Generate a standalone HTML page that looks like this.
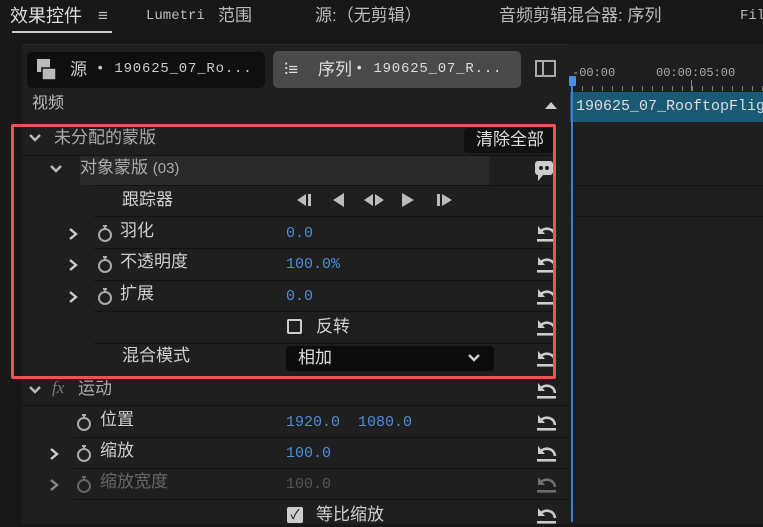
<!DOCTYPE html>
<html><head><meta charset="utf-8"><style>
*{margin:0;padding:0;box-sizing:border-box}
body{width:763px;height:522px;background:#181818;overflow:hidden;position:relative;font-family:"Liberation Sans","Noto Sans CJK SC",sans-serif;color:#c8c8c8}
.a{position:absolute;white-space:nowrap}
.t{font-size:17px;color:#cfcfcf;line-height:24px}
.m{font-family:"Liberation Mono","Noto Sans CJK SC",monospace}
.b{color:#4a8fd8;font-size:15px;line-height:20px}
.sep{position:absolute;height:1px;background:#121212}
.rs{position:absolute;left:534px;width:24px;height:22px}
.ch{position:absolute;width:12px;height:14px}
.sw{position:absolute;width:16px;height:20px}
</style></head><body>
<svg width="0" height="0" style="position:absolute"><defs>
<symbol id="r" viewBox="0 0 24 22"><path d="M4 4 L4 12 L11 12 Z" fill="#ccc"/><path d="M7 9 C11 5 20 6 21 14" stroke="#ccc" stroke-width="2.6" fill="none"/><rect x="3" y="17" width="19" height="2.6" fill="#ccc"/></symbol>
<symbol id="cr" viewBox="0 0 12 14"><path d="M3 2 L9 7 L3 12" stroke="#ccc" stroke-width="2.4" fill="none"/></symbol>
<symbol id="cd" viewBox="0 0 14 12"><path d="M2 3 L7 8 L12 3" stroke="#bbb" stroke-width="2.4" fill="none"/></symbol>
<symbol id="s" viewBox="0 0 16 20"><circle cx="8" cy="12" r="6" stroke="#aaa" stroke-width="2" fill="none"/><path d="M6 3 L10 3 M8 3 L8 6" stroke="#aaa" stroke-width="2"/></symbol>
</defs></svg>
<!-- top tabs -->
<div class="a t" style="left:10px;top:4px;font-size:18px;color:#ddd">效果控件</div>
<div class="a" style="left:12px;top:31px;width:100px;height:2px;background:#ccc"></div>
<div class="a" style="left:98px;top:6px;font-size:17px;color:#bbb">≡</div>
<div class="a m" style="left:146px;top:8px;font-size:14px;color:#bbb">Lumetri</div>
<div class="a t" style="left:218px;top:4px;color:#bbb">范围</div>
<div class="a t" style="left:315px;top:4px;color:#bbb">源:（无剪辑）</div>
<div class="a t" style="left:499px;top:4px;color:#bbb">音频剪辑混合器: 序列</div>
<div class="a m" style="left:740px;top:8px;font-size:14px;color:#bbb">Fil</div>
<!-- left panel -->
<div class="a" style="left:22px;top:44px;width:548px;height:480px;background:#1f1f1f;border-top:1px solid #2a2a2a"></div>
<div class="a" style="left:27px;top:52px;width:238px;height:36px;background:#0f0f0f;border-radius:5px"></div>
<svg class="a" style="left:36px;top:58px" width="22" height="24"><rect x="1" y="1" width="13" height="13" fill="#bbb"/><rect x="6" y="10" width="14" height="12" fill="#bbb" stroke="#0f0f0f" stroke-width="1.5"/></svg>
<div class="a t" style="left:70px;top:58px;color:#ccc">源</div>
<div class="a m" style="left:96px;top:61px;font-size:14px;color:#ccc;letter-spacing:0.8px">• 190625_07_Ro...</div>
<div class="a" style="left:273px;top:51px;width:248px;height:37px;background:#4a4a4a;border-radius:5px"></div>
<div class="a t" style="left:284px;top:58px;color:#ddd">⫶≡</div>
<div class="a t" style="left:318px;top:58px;color:#ddd">序列</div>
<div class="a m" style="left:355px;top:61px;font-size:14px;color:#ddd;letter-spacing:0.8px">• 190625_07_R...</div>
<div class="a" style="left:535px;top:60px;width:21px;height:17px;border:2px solid #aaa"></div>
<div class="a" style="left:542px;top:60px;width:2px;height:17px;background:#aaa"></div>
<div class="a t" style="left:32px;top:92px;font-size:16px;color:#bbb">视频</div>
<div class="a" style="left:545px;top:102px;width:0;height:0;border-left:6px solid transparent;border-right:6px solid transparent;border-bottom:7px solid #ccc"></div>
<!-- rows -->
<div class="sep" style="left:22px;top:155px;width:530px"></div>
<div class="a" style="left:80px;top:156px;width:409px;height:29px;background:#2a2a2a"></div>
<div class="sep" style="left:94px;top:185px;width:460px"></div>
<div class="sep" style="left:94px;top:216px;width:460px"></div>
<div class="sep" style="left:94px;top:248px;width:460px"></div>
<div class="sep" style="left:94px;top:280px;width:460px"></div>
<div class="sep" style="left:94px;top:311px;width:460px"></div>
<div class="sep" style="left:94px;top:343px;width:460px"></div>
<div class="sep" style="left:22px;top:405px;width:546px"></div>
<div class="sep" style="left:74px;top:437px;width:494px"></div>
<div class="sep" style="left:74px;top:468px;width:494px"></div>
<div class="sep" style="left:74px;top:499px;width:494px"></div>

<svg class="ch" style="left:28px;top:132px;width:14px;height:12px"><use href="#cd"/></svg>
<div class="a t" style="left:54px;top:126px;color:#aaa">未分配的蒙版</div>
<div class="a" style="left:464px;top:128px;width:90px;height:25px;background:#111;border-radius:4px"></div>
<div class="a t" style="left:476px;top:128px;color:#ddd">清除全部</div>
<svg class="ch" style="left:49px;top:163px;width:14px;height:12px"><use href="#cd"/></svg>
<div class="a t" style="left:80px;top:156px;color:#aaa">对象蒙版 <span style="font-size:15px">(03)</span></div>
<svg class="a" style="left:534px;top:160px" width="20" height="22"><rect x="1" y="1" width="18" height="14" rx="3" fill="#ccc"/><path d="M4 14 L4 21 L10 14Z" fill="#ccc"/><circle cx="7" cy="8" r="2" fill="#222"/><circle cx="13" cy="8" r="2" fill="#222"/></svg>
<div class="a t" style="left:122px;top:188px">跟踪器</div>
<svg class="a" style="left:294px;top:192px" width="170" height="16" fill="#bbb"><path d="M12 2 L3 8 L12 14Z"/><rect x="14" y="2" width="3" height="12"/><path d="M50 1 L39 8 L50 15Z"/><path d="M79 2 L70 8 L79 14Z M81 2 L90 8 L81 14Z"/><path d="M108 1 L120 8 L108 15Z"/><rect x="143" y="2" width="3" height="12"/><path d="M148 2 L158 8 L148 14Z"/></svg>

<svg class="ch" style="left:67px;top:227px"><use href="#cr"/></svg><svg class="sw" style="left:97px;top:223px"><use href="#s"/></svg><div class="a t" style="left:120px;top:219px">羽化</div>
<div class="a b m" style="left:286px;top:224px">0.0</div>
<svg class="ch" style="left:67px;top:258px"><use href="#cr"/></svg><svg class="sw" style="left:97px;top:254px"><use href="#s"/></svg><div class="a t" style="left:120px;top:250px">不透明度</div>
<div class="a b m" style="left:286px;top:255px">100.0%</div>
<svg class="ch" style="left:67px;top:290px"><use href="#cr"/></svg><svg class="sw" style="left:97px;top:286px"><use href="#s"/></svg><div class="a t" style="left:120px;top:282px">扩展</div>
<div class="a b m" style="left:286px;top:287px">0.0</div>
<div class="a" style="left:287px;top:319px;width:15px;height:15px;border:2px solid #ccc;border-radius:2px"></div>
<div class="a t" style="left:316px;top:315px">反转</div>
<div class="a t" style="left:122px;top:344px">混合模式</div>
<div class="a" style="left:286px;top:346px;width:208px;height:25px;background:#0c0c0c;border-radius:4px"></div>
<div class="a t" style="left:298px;top:346px;color:#ddd">相加</div>
<svg class="a" style="left:467px;top:353px" width="14" height="10"><path d="M2 2 L7 7 L12 2" stroke="#ccc" stroke-width="2.5" fill="none"/></svg>

<svg class="ch" style="left:28px;top:384px;width:14px;height:12px"><use href="#cd"/></svg>
<div class="a" style="left:52px;top:378px;font-size:17px;color:#777;font-style:italic;font-family:'Liberation Serif',serif">fx</div>
<div class="a t" style="left:78px;top:377px;color:#aaa">运动</div>
<svg class="sw" style="left:76px;top:412px"><use href="#s"/></svg><div class="a t" style="left:100px;top:408px">位置</div>
<div class="a b m" style="left:286px;top:413px">1920.0 &nbsp;1080.0</div>
<svg class="ch" style="left:48px;top:447px"><use href="#cr"/></svg><svg class="sw" style="left:76px;top:443px"><use href="#s"/></svg><div class="a t" style="left:100px;top:439px">缩放</div>
<div class="a b m" style="left:286px;top:444px">100.0</div>
<svg class="ch" style="left:48px;top:478px;opacity:.6"><use href="#cr"/></svg><svg class="sw" style="left:76px;top:474px;opacity:.5"><use href="#s"/></svg><div class="a t" style="left:100px;top:470px;color:#666">缩放宽度</div>
<div class="a m" style="left:286px;top:476px;font-size:15px;color:#555">100.0</div>
<div class="a" style="left:287px;top:507px;width:16px;height:16px;background:#ccc;border-radius:2px;color:#111;font-size:13px;line-height:16px;text-align:center">✓</div>
<div class="a t" style="left:316px;top:503px">等比缩放</div>

<svg class="rs" style="top:222px"><use href="#r"/></svg>
<svg class="rs" style="top:253px"><use href="#r"/></svg>
<svg class="rs" style="top:285px"><use href="#r"/></svg>
<svg class="rs" style="top:316px"><use href="#r"/></svg>
<svg class="rs" style="top:347px"><use href="#r"/></svg>
<svg class="rs" style="top:379px"><use href="#r"/></svg>
<svg class="rs" style="top:411px"><use href="#r"/></svg>
<svg class="rs" style="top:442px"><use href="#r"/></svg>
<svg class="rs" style="top:473px;opacity:.45"><use href="#r"/></svg>
<svg class="rs" style="top:504px"><use href="#r"/></svg>

<div class="a" style="left:11px;top:124px;width:545px;height:255px;border:3px solid #e85457;border-radius:2px"></div>

<!-- timeline -->
<div class="a" style="left:570px;top:44px;width:193px;height:480px;background:#1e1e1e"></div>
<div class="a m" style="left:572px;top:66px;font-size:12px;color:#aaa">-00:00</div>
<div class="a m" style="left:656px;top:66px;font-size:12px;color:#aaa">00:00:05:00</div>
<div class="a" style="left:572px;top:86px;width:191px;height:5px;background:repeating-linear-gradient(90deg,#777 0 1px,transparent 1px 10px)"></div>
<div class="a" style="left:691px;top:80px;width:1px;height:11px;background:#888"></div>
<div class="a" style="left:570px;top:92px;width:193px;height:30px;background:#1b5a75"></div>
<div class="a m" style="left:576px;top:98px;font-size:15px;color:#ddd">190625_07_RooftopFlig</div>
<div class="a" style="left:571px;top:76px;width:2px;height:446px;background:#3a7fd0"></div>
<div class="a" style="left:569px;top:76px;width:7px;height:10px;background:#4a8fe0;border-radius:1px"></div>
<div class="sep" style="left:573px;top:185px;width:190px;background:#151515"></div>
<div class="sep" style="left:573px;top:216px;width:190px;background:#151515"></div>
</body></html>
